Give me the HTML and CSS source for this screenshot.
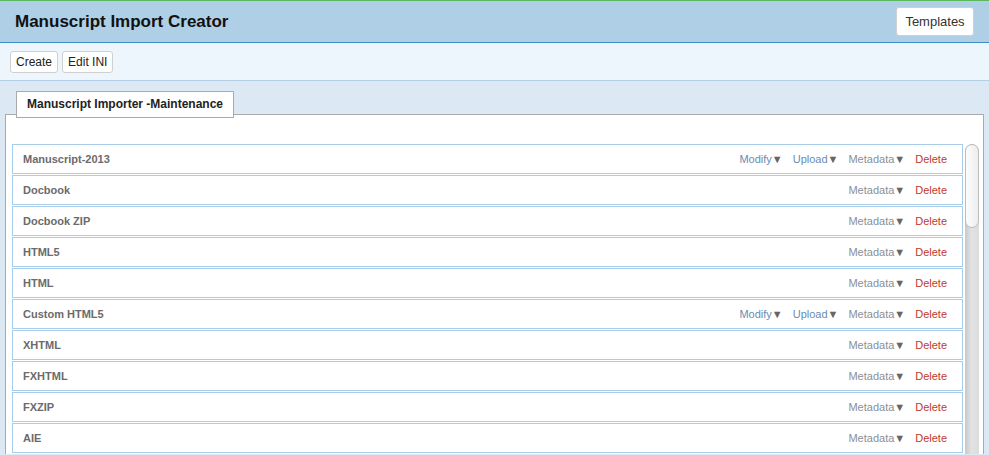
FILE: index.html
```html
<!DOCTYPE html>
<html lang="en">
<head>
    <meta charset="UTF-8">
    <meta name="viewport" content="width=device-width, initial-scale=1.0">
    <title>Manuscript Import Creator</title>
    <link rel="stylesheet" href="styles.css">
</head>
<body>
    <div class="header">
        <h1>Manuscript Import Creator</h1>
        <button type="button" class="btn btn-large">Templates</button>
    </div>

    <div class="toolbar">
        <button type="button" class="btn">Create</button>
        <button type="button" class="btn">Edit INI</button>
    </div>

    <div class="content">
        <div class="tab">Manuscript Importer -Maintenance</div>
        <div class="panel">
            <!-- Lista de importadores -->
            <div class="importer-list">
                <div class="importer-row">
                    <span class="importer-name">Manuscript-2013</span>
                    <span class="actions">
                        <span class="action action-blue">Modify<span class="caret">▼</span></span>
                        <span class="action action-blue">Upload<span class="caret">▼</span></span>
                        <span class="action">Metadata<span class="caret">▼</span></span>
                        <span class="action action-delete">Delete</span>
                    </span>
                </div>
                <div class="importer-row">
                    <span class="importer-name">Docbook</span>
                    <span class="actions">
                        <span class="action">Metadata<span class="caret">▼</span></span>
                        <span class="action action-delete">Delete</span>
                    </span>
                </div>
                <div class="importer-row">
                    <span class="importer-name">Docbook ZIP</span>
                    <span class="actions">
                        <span class="action">Metadata<span class="caret">▼</span></span>
                        <span class="action action-delete">Delete</span>
                    </span>
                </div>
                <div class="importer-row">
                    <span class="importer-name">HTML5</span>
                    <span class="actions">
                        <span class="action">Metadata<span class="caret">▼</span></span>
                        <span class="action action-delete">Delete</span>
                    </span>
                </div>
                <div class="importer-row">
                    <span class="importer-name">HTML</span>
                    <span class="actions">
                        <span class="action">Metadata<span class="caret">▼</span></span>
                        <span class="action action-delete">Delete</span>
                    </span>
                </div>
                <div class="importer-row">
                    <span class="importer-name">Custom HTML5</span>
                    <span class="actions">
                        <span class="action action-blue">Modify<span class="caret">▼</span></span>
                        <span class="action action-blue">Upload<span class="caret">▼</span></span>
                        <span class="action">Metadata<span class="caret">▼</span></span>
                        <span class="action action-delete">Delete</span>
                    </span>
                </div>
                <div class="importer-row">
                    <span class="importer-name">XHTML</span>
                    <span class="actions">
                        <span class="action">Metadata<span class="caret">▼</span></span>
                        <span class="action action-delete">Delete</span>
                    </span>
                </div>
                <div class="importer-row">
                    <span class="importer-name">FXHTML</span>
                    <span class="actions">
                        <span class="action">Metadata<span class="caret">▼</span></span>
                        <span class="action action-delete">Delete</span>
                    </span>
                </div>
                <div class="importer-row">
                    <span class="importer-name">FXZIP</span>
                    <span class="actions">
                        <span class="action">Metadata<span class="caret">▼</span></span>
                        <span class="action action-delete">Delete</span>
                    </span>
                </div>
                <div class="importer-row">
                    <span class="importer-name">AIE</span>
                    <span class="actions">
                        <span class="action">Metadata<span class="caret">▼</span></span>
                        <span class="action action-delete">Delete</span>
                    </span>
                </div>
            </div>
            <!-- Barra de desplazamiento de la lista -->
            <div class="scrollbar">
                <div class="scrollbar-thumb"></div>
            </div>
        </div>
    </div>
</body>
</html>
```

FILE: styles.css
```css
body {
    margin: 0;
    font-family: "Liberation Sans", Arial, sans-serif;
    background-color: #dce9f4;
    overflow: hidden;
}

.header {
    display: flex;
    justify-content: space-between;
    align-items: center;
    height: 41px;
    padding: 0 15px;
    background-color: #aecfe6;
    border-top: 1px solid #5cb85c;
    border-bottom: 1px solid #3b8ec8;
}

.header h1 {
    margin: 0;
    font-size: 17px;
    font-weight: bold;
    color: #111;
}

.btn {
    height: 22px;
    padding: 0 5px;
    border: 1px solid #d0d0d0;
    border-radius: 3px;
    background-color: #fff;
    color: #222;
    font-family: inherit;
    font-size: 12px;
    cursor: pointer;
}

.btn-large {
    width: 78px;
    height: 29px;
    font-size: 13px;
    color: #333;
}

.toolbar {
    display: flex;
    align-items: center;
    gap: 4px;
    height: 37px;
    padding: 0 10px;
    background-color: #eef6fd;
    border-bottom: 1px solid #b3cfe5;
}

.content {
    padding: 10px 5px 0;
}

.tab {
    position: relative;
    z-index: 1;
    display: inline-block;
    width: 216px;
    height: 25px;
    line-height: 25px;
    margin-left: 11px;
    margin-bottom: -4px;
    border: 1px solid #aaa;
    background-color: #fff;
    text-align: center;
    font-size: 12px;
    font-weight: bold;
    color: #222;
}

.panel {
    display: flex;
    gap: 2px;
    padding: 29px 4px 0 6px;
    background-color: #fff;
    border: 1px solid #aaa;
    border-bottom: none;
}

.importer-list {
    flex: 1;
    height: 310px;
    overflow: hidden;
}

.importer-row {
    display: flex;
    justify-content: space-between;
    align-items: center;
    height: 28px;
    margin-bottom: 1px;
    padding: 0 15px 0 10px;
    border: 1px solid #a9cde8;
}

.importer-name {
    font-size: 11px;
    font-weight: bold;
    color: #6b6b6b;
}

.actions {
    display: flex;
    align-items: baseline;
    gap: 10px;
    font-size: 11px;
    line-height: 14px;
}

.action {
    color: #8a8f96;
    cursor: pointer;
}

.action-blue {
    color: #6a8cb3;
}

.action-delete {
    color: #c0392b;
}

.caret {
    color: #666;
    font-size: 11px;
}

.scrollbar {
    width: 14px;
    height: 310px;
    background: linear-gradient(to right, #c8c8c8, #e2e2e2 45%, #dcdcdc);
    border-radius: 7px 7px 0 0;
}

.scrollbar-thumb {
    box-sizing: border-box;
    height: 84px;
    background: linear-gradient(to right, #fdfdfd, #ededed);
    border: 1px solid #bcbcbc;
    border-radius: 7px;
}
```
